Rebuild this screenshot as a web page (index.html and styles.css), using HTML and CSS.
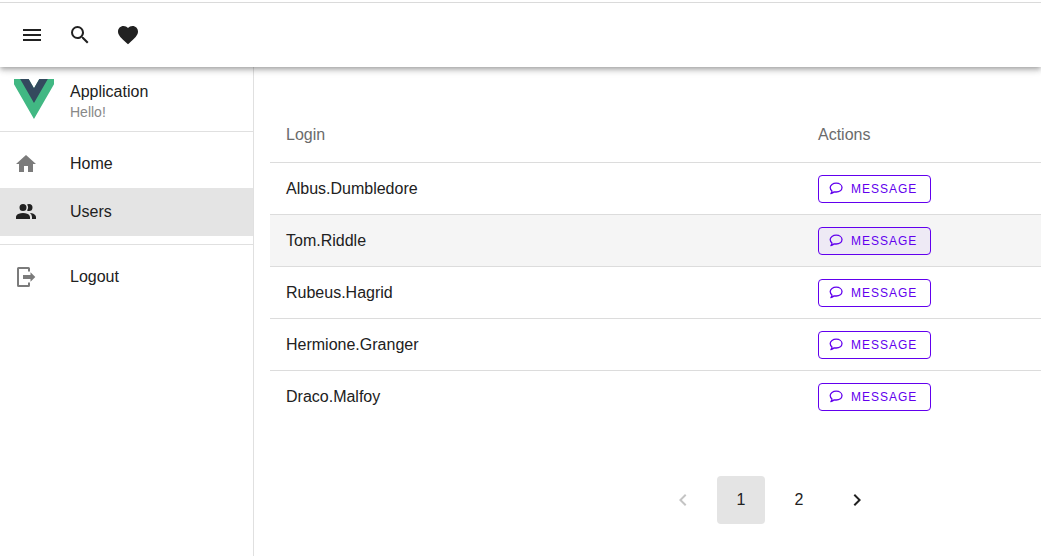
FILE: index.html
```html
<!DOCTYPE html>
<html lang="en">
<head>
<meta charset="utf-8">
<title>Application</title>
<link rel="stylesheet" href="styles.css">
</head>
<body>
<svg class="defs" aria-hidden="true">
  <symbol id="comment" viewBox="0 0 14 14">
    <path fill="none" stroke="currentColor" stroke-width="1.3" stroke-linejoin="round" d="M7.200 1.200C10.400 1.200 13 3.100 13 5.600S10.400 10 7.200 10C6.500 10 5.800 9.900 5.200 9.800C4.200 10.900 3.200 11.400 1.900 11.600C2.600 10.800 3 10.100 3 9C1.900 8.200 1.200 7 1.200 5.600C1.200 3.100 4 1.200 7.200 1.200Z"/>
  </symbol>
</svg>
<header class="topbar">
  <button class="icon-button" aria-label="Menu"><svg class="icon" viewBox="0 0 24 24"><path d="M3 6H21V8H3V6M3 11H21V13H3V11M3 16H21V18H3V16Z"/></svg></button>
  <button class="icon-button" aria-label="Search"><svg class="icon" viewBox="0 0 24 24"><path d="M9.500 3A6.500 6.500 0 0 1 16 9.500C16 11.110 15.410 12.590 14.440 13.730L14.710 14H15.500L20.500 19L19 20.500L14 15.500V14.710L13.730 14.440C12.590 15.410 11.110 16 9.500 16A6.500 6.500 0 0 1 3 9.500A6.500 6.500 0 0 1 9.500 3M9.500 5C7 5 5 7 5 9.500S7 14 9.500 14 14 12 14 9.500 12 5 9.500 5Z"/></svg></button>
  <button class="icon-button" aria-label="Favorites"><svg class="icon" viewBox="0 0 24 24"><path d="M12 21.350L10.550 20.030C5.400 15.360 2 12.270 2 8.500C2 5.410 4.420 3 7.500 3C9.240 3 10.910 3.810 12 5.080C13.090 3.810 14.760 3 16.500 3C19.580 3 22 5.410 22 8.500C22 12.270 18.600 15.360 13.450 20.030L12 21.350Z"/></svg></button>
</header>
<div class="layout">
  <nav class="sidebar">
    <div class="brand">
      <svg class="logo" viewBox="0 0 262 227" preserveAspectRatio="xMidYMid slice" role="img" aria-label="Logo">
        <path fill="#41b883" d="M161.100 0L130.870 52.350L100.650 0H0L130.870 226.690L261.750 0Z"/>
        <path fill="#34495e" d="M161.100 0L130.870 52.350L100.650 0H52.350L130.870 136.010L209.400 0Z"/>
      </svg>
      <div class="brand-text">
        <div class="brand-title">Application</div>
        <div class="brand-subtitle">Hello!</div>
      </div>
    </div>
    <div class="nav-group">
      <a class="nav-item" href="#home"><svg class="icon" viewBox="0 0 24 24"><path d="M10 20V14H14V20H19V12H22L12 3L2 12H5V20H10Z"/></svg>Home</a>
      <a class="nav-item active" href="#users" aria-current="page"><svg class="icon" viewBox="0 0 24 24"><path d="M16 17v2H2v-2s0-4 7-4 7 4 7 4m-3.500-9.500A3.500 3.500 0 1 0 9 11a3.500 3.500 0 0 0 3.500-3.500m3.440 5.500A5.320 5.320 0 0 1 18 17v2h4v-2s0-3.630-6.060-4M15 4a3.400 3.400 0 0 0-1.930.590 5 5 0 0 1 0 5.820A3.400 3.400 0 0 0 15 11a3.500 3.500 0 0 0 0-7"/></svg>Users</a>
    </div>
    <div class="nav-group">
      <a class="nav-item" href="#logout"><svg class="icon" viewBox="0 0 24 24"><path d="M16.500 16.700V14H9V10H16.500V7.300L21.300 12L16.500 16.700M14.500 2A1.500 1.500 0 0 1 16 3.500V6.500H14V4H5V20H14V17.500H16V20.500A1.500 1.500 0 0 1 14.500 22H4.500A1.500 1.500 0 0 1 3 20.500V3.500A1.500 1.500 0 0 1 4.500 2H14.500Z"/></svg>Logout</a>
    </div>
  </nav>
  <main class="content">
    <div class="panel">
      <table class="users">
        <thead>
          <tr><th class="login-col" scope="col">Login</th><th scope="col">Actions</th></tr>
        </thead>
        <tbody>
          <tr><td>Albus.Dumbledore</td><td><button class="message"><svg class="message-icon"><use href="#comment"/></svg>MESSAGE</button></td></tr>
          <tr class="hovered"><td>Tom.Riddle</td><td><button class="message"><svg class="message-icon"><use href="#comment"/></svg>MESSAGE</button></td></tr>
          <tr><td>Rubeus.Hagrid</td><td><button class="message"><svg class="message-icon"><use href="#comment"/></svg>MESSAGE</button></td></tr>
          <tr><td>Hermione.Granger</td><td><button class="message"><svg class="message-icon"><use href="#comment"/></svg>MESSAGE</button></td></tr>
          <tr><td>Draco.Malfoy</td><td><button class="message"><svg class="message-icon"><use href="#comment"/></svg>MESSAGE</button></td></tr>
        </tbody>
      </table>
      <div class="pagination">
        <button class="page" disabled aria-label="Previous page"><svg class="page-icon" viewBox="0 0 24 24"><path d="M15.410 16.580L10.830 12L15.410 7.410L14 6L8 12L14 18L15.410 16.580Z"/></svg></button>
        <button class="page current" aria-current="page">1</button>
        <button class="page">2</button>
        <button class="page" aria-label="Next page"><svg class="page-icon" viewBox="0 0 24 24"><path d="M8.590 16.580L13.170 12L8.590 7.410L10 6L16 12L10 18L8.590 16.580Z"/></svg></button>
      </div>
    </div>
  </main>
</div>
</body>
</html>
```
FILE: styles.css
```css
* {
  box-sizing: border-box;
}

body {
  display: flex;
  flex-direction: column;
  min-height: 100vh;
  margin: 0;
  padding-top: 2px;
  background: #fff;
  color: #212121;
  font: 16px/24px "Liberation Sans", Arial, sans-serif;
}

button {
  padding: 0;
  border: 0;
  background: none;
  color: inherit;
  font: inherit;
  cursor: pointer;
}

.defs {
  display: none;
}

.topbar {
  position: relative;
  z-index: 1;
  display: flex;
  align-items: center;
  height: 65px;
  padding: 0 8px;
  border-top: 1px solid #dadada;
  background: #fff;
  box-shadow: 0 2px 4px -1px rgba(0, 0, 0, 0.2), 0 4px 5px rgba(0, 0, 0, 0.14), 0 1px 10px rgba(0, 0, 0, 0.12);
  clip-path: inset(0 0 -16px);
}

.icon-button {
  display: grid;
  place-items: center;
  width: 48px;
  height: 48px;
}

.icon {
  flex: none;
  width: 24px;
  height: 24px;
  fill: currentColor;
}

.layout {
  display: flex;
  flex: 1;
}

.sidebar {
  flex: none;
  width: 254px;
  border-right: 1px solid #e0e0e0;
}

.brand {
  display: flex;
  align-items: center;
  gap: 16px;
  height: 64px;
  padding: 0 14px;
}

.logo {
  width: 40px;
  height: 40px;
}

.brand-text {
  padding-top: 3px;
}

.brand-title {
  line-height: 22px;
}

.brand-subtitle {
  color: #888;
  font-size: 14px;
  line-height: 18px;
}

.nav-group {
  padding: 8px 0;
  border-top: 1px solid #e0e0e0;
}

.nav-item {
  display: flex;
  align-items: center;
  gap: 32px;
  height: 48px;
  padding: 0 14px;
  color: inherit;
  text-decoration: none;
}

.nav-item .icon {
  color: #7b7b7b;
}

.nav-item.active {
  background: #e4e4e4;
}

.nav-item.active .icon {
  color: #212121;
}

.content {
  flex: 1;
  min-width: 0;
  overflow-x: auto;
  scrollbar-width: none;
  padding: 40px 16px 32px;
}

.panel {
  min-width: 1000px;
}

.users {
  width: 100%;
  border-spacing: 0;
  table-layout: fixed;
}

.users th,
.users td {
  padding: 0 16px;
  text-align: left;
  vertical-align: middle;
}

.users th {
  height: 55px;
  color: #6b6b6b;
  font-weight: normal;
}

.users td {
  height: 52px;
  border-top: 1px solid #dcdcdc;
}

.login-col {
  width: 532px;
}

.hovered {
  background: #f5f5f5;
}

.message {
  display: flex;
  align-items: center;
  gap: 8px;
  height: 28px;
  padding: 0 13px 0 10px;
  border: 1px solid #6200ee;
  border-radius: 4px;
  color: #6200ee;
  font-size: 12px;
  letter-spacing: 1px;
}

.hovered .message {
  background: #eeeaf5;
}

.message-icon {
  width: 14px;
  height: 14px;
}

.pagination {
  display: flex;
  justify-content: center;
  gap: 10px;
  margin-top: 54px;
}

.page {
  display: grid;
  place-items: center;
  width: 48px;
  height: 48px;
  border-radius: 4px;
}

.page.current {
  background: #e4e4e4;
}

.page:disabled {
  color: #c4c4c4;
}

.page-icon {
  width: 24px;
  height: 24px;
  fill: currentColor;
}
```
